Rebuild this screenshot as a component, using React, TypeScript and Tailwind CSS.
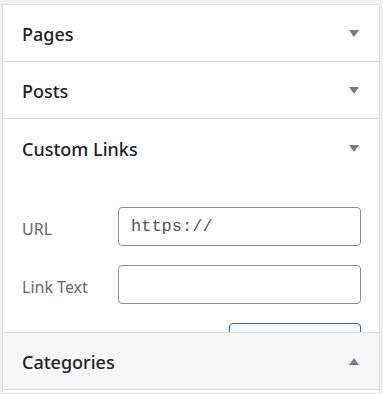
export default function App() {
  const font = { fontFamily: '"Noto Sans", "Open Sans", sans-serif' };

  return (
    <div className="h-[394px] w-[383px] overflow-hidden bg-[#f0f0f1] pt-[4px] pl-[2px] pr-[3px]" style={font}>
      <div className="h-[390px] overflow-hidden border border-[#dcdcde] bg-white">
        {/* Pages */}
        <div className="flex h-[57px] items-center justify-between border-b border-[#dcdcde] pl-[19px] pr-[20px]">
          <h3 className="pt-[3px] text-[18px] font-medium text-[#1d2327]">Pages</h3>
          <ArrowDown />
        </div>

        {/* Posts */}
        <div className="flex h-[57px] items-center justify-between border-b border-[#dcdcde] pl-[19px] pr-[20px]">
          <h3 className="pt-[3px] text-[18px] font-medium text-[#1d2327]">Posts</h3>
          <ArrowDown />
        </div>

        {/* Custom Links (open) */}
        <div className="h-[213px] overflow-hidden">
          <div className="flex h-[58px] items-center justify-between pl-[19px] pr-[20px]">
            <h3 className="pt-[2px] text-[18px] font-medium text-[#1d2327]">Custom Links</h3>
            <ArrowDown />
          </div>
          <div className="flex flex-col gap-[19px] pt-[30px] pl-[19px] pr-[18px]">
            <div className="flex items-center">
              <label className="w-[96px] pt-[4px] text-[16px] text-[#646970]">URL</label>
              <input
                defaultValue="https://"
                className="h-[39px] w-[243px] rounded-[4px] border border-[#8c8f94] bg-white px-[12px] text-[17px] text-[#50575e] outline-none"
                style={{ fontFamily: '"Liberation Mono", "DejaVu Sans Mono", monospace' }}
              />
            </div>
            <div className="flex items-center">
              <label className="w-[96px] pt-[4px] text-[16px] text-[#646970]">Link Text</label>
              <input className="h-[39px] w-[243px] rounded-[4px] border border-[#8c8f94] bg-white px-[12px] text-[17px] outline-none" />
            </div>
            <div className="flex justify-end">
              <button aria-label="Add to Menu" className="h-[40px] w-[132px] rounded-[4px] border border-[#2271b1] bg-[#f6f7f7]" />
            </div>
          </div>
        </div>

        {/* Categories */}
        <div className="flex h-[58px] items-center justify-between border-y border-[#dcdcde] bg-[#f6f7f7] pl-[19px] pr-[20px]">
          <h3 className="pt-[3px] text-[18px] font-medium text-[#1d2327]">Categories</h3>
          <ArrowUp />
        </div>
      </div>
    </div>
  );
}

function ArrowDown() {
  return (
    <svg width="10" height="7" viewBox="0 0 10 7" className="mt-[1px]">
      <polygon points="0,0 10,0 5,7" fill="#787c82" />
    </svg>
  );
}

function ArrowUp() {
  return (
    <svg width="10" height="7" viewBox="0 0 10 7" className="mt-[1px]">
      <polygon points="0,7 10,7 5,0" fill="#787c82" />
    </svg>
  );
}
